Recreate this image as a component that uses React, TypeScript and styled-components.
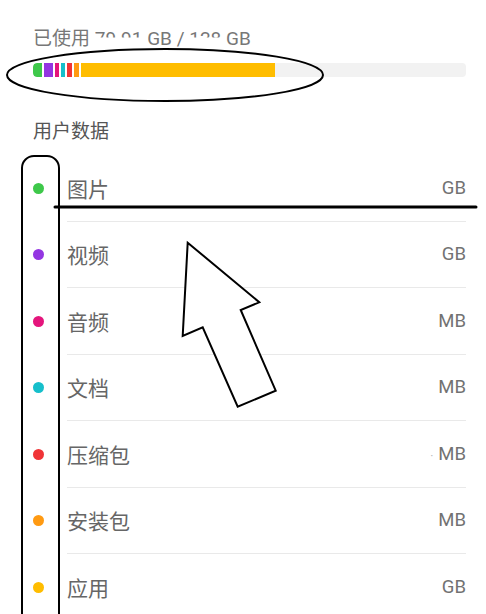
import React, { FC } from 'react'
import styled, { createGlobalStyle } from 'styled-components'

const GlobalStyle = createGlobalStyle`
    html, body {
        margin: 0;
        padding: 0;
        background: #ffffff;
    }
    body {
        font-family: Roboto, "Noto Sans CJK SC", "Noto Sans", sans-serif;
    }
`

interface Category {
    name: string
    unit: string
    color: string
    width: number
    faint?: boolean
}

const categories: Category[] = [
    { name: '图片', unit: 'GB', color: '#3ec84a', width: 9 },
    { name: '视频', unit: 'GB', color: '#9436e2', width: 9 },
    { name: '音频', unit: 'MB', color: '#e4157c', width: 4 },
    { name: '文档', unit: 'MB', color: '#16bfcb', width: 4 },
    { name: '压缩包', unit: 'MB', color: '#f03437', width: 5, faint: true },
    { name: '安装包', unit: 'MB', color: '#ff9a12', width: 5 },
    { name: '应用', unit: 'GB', color: '#ffbd00', width: 194 },
]

const Page = styled.div`
    position: relative;
    width: 486px;
    height: 614px;
    overflow: hidden;
    box-sizing: border-box;
    padding: 27px 20px 0 33px;
`
const Usage = styled.div`
    font-size: 19px;
    line-height: 24px;
    color: #777777;
    white-space: nowrap;
`
const Erased = styled.span`
    display: inline-block;
    clip-path: inset(0 0 56% 0);
`
const Bar = styled.div`
    display: flex;
    height: 14px;
    margin-top: 12px;
    border-radius: 4px;
    overflow: hidden;
    background: #f2f2f2;
`
const Segment = styled.div<{ $color: string }>`
    flex: none;
    height: 100%;
    background: ${p => p.$color};
    border-right: 2px solid #ffffff;
    &:last-child {
        border-right: none;
    }
    &:first-child {
        border-radius: 4px 0 0 4px;
    }
`
const SectionTitle = styled.div`
    margin-top: 43px;
    font-size: 19px;
    line-height: 24px;
    color: #555555;
`
const List = styled.ul`
    list-style: none;
    margin: 11px 0 0;
    padding: 0;
`
const Row = styled.li`
    display: flex;
    align-items: center;
    height: 66.5px;
`
const Dot = styled.span<{ $color: string }>`
    flex: none;
    width: 11px;
    height: 11px;
    border-radius: 50%;
    margin-right: 23px;
    background: ${p => p.$color};
`
const RowBody = styled.div`
    flex: 1;
    height: 100%;
    display: flex;
    align-items: center;
    justify-content: space-between;
    border-bottom: 1px solid #e9e9e9;
    box-sizing: border-box;
`
const Label = styled.span`
    font-size: 21px;
    color: #666666;
`
const Unit = styled.span`
    font-size: 18.5px;
    color: #727272;
`
const Speck = styled.span`
    color: #bbbbbb;
    font-size: 12px;
    margin-right: 5px;
`
const Marks = styled.svg`
    position: absolute;
    left: 0;
    top: 0;
    width: 486px;
    height: 614px;
    pointer-events: none;
`

const App: FC = () => {
    return (
        <Page>
            <GlobalStyle />
            <Usage>
                已使用 <Erased>79.91</Erased> GB / <Erased>128</Erased> GB
            </Usage>
            <Bar>
                {categories.map(c => (
                    <Segment key={c.name} $color={c.color} style={{ width: c.width }} />
                ))}
            </Bar>
            <SectionTitle>用户数据</SectionTitle>
            <List>
                {categories.map(c => (
                    <Row key={c.name}>
                        <Dot $color={c.color} />
                        <RowBody>
                            <Label>{c.name}</Label>
                            <Unit>
                                {c.faint && <Speck>·</Speck>}
                                {c.unit}
                            </Unit>
                        </RowBody>
                    </Row>
                ))}
            </List>
            <Marks viewBox="0 0 486 614">
                <ellipse cx="165" cy="75" rx="158" ry="26" fill="none" stroke="#000" strokeWidth="2" />
                <rect x="22" y="156" width="37" height="480" rx="12" fill="none" stroke="#000" strokeWidth="2" />
                <line x1="55" y1="207" x2="476" y2="207" stroke="#000" strokeWidth="3" strokeLinecap="round" />
                <polygon
                    points="187.7,242.7 259.3,302.3 240.7,310 275.7,390.7 237.7,406.7 202.7,327.3 182.7,336"
                    fill="#fff"
                    stroke="#000"
                    strokeWidth="2"
                    strokeLinejoin="miter"
                />
            </Marks>
        </Page>
    )
}
export default App
